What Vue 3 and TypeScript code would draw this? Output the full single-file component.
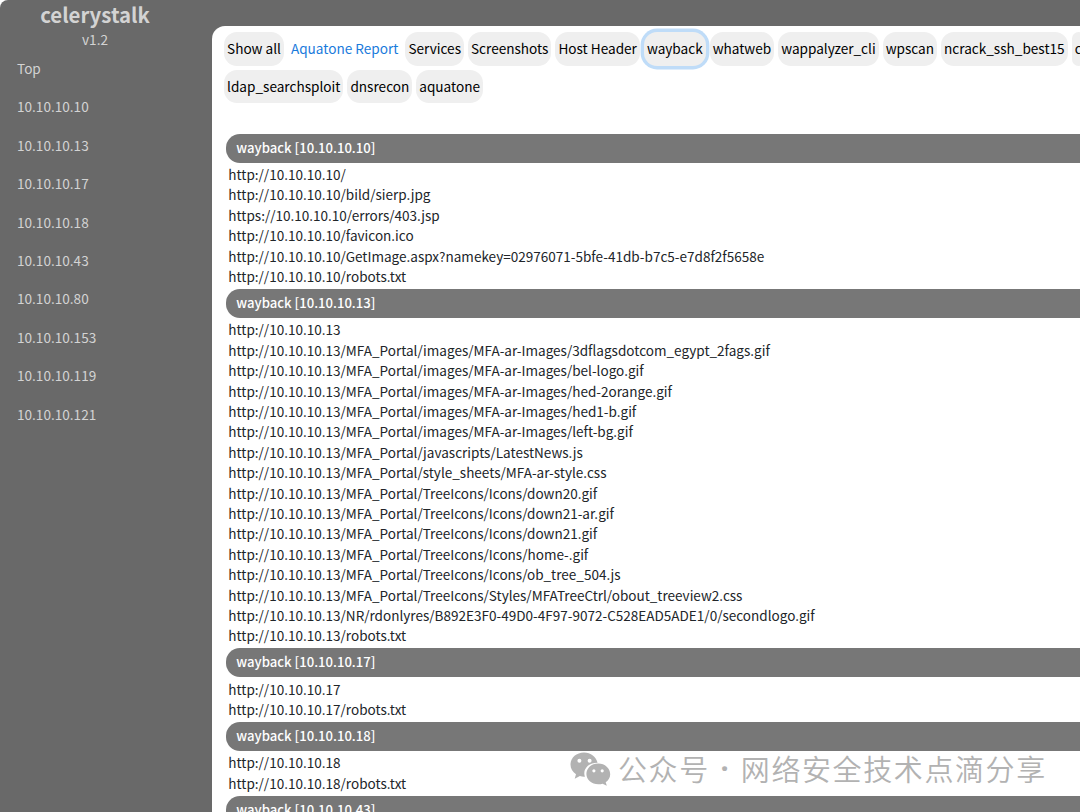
<script setup lang="ts">
interface Tool {
  name: string
  link?: boolean
  active?: boolean
}

interface Report {
  host: string
  urls: string[]
}

const hosts: string[] = [
  '10.10.10.10', '10.10.10.13', '10.10.10.17', '10.10.10.18', '10.10.10.43',
  '10.10.10.80', '10.10.10.153', '10.10.10.119', '10.10.10.121',
]

const toolRows: Tool[][] = [
  [
    { name: 'Show all' },
    { name: 'Aquatone Report', link: true },
    { name: 'Services' },
    { name: 'Screenshots' },
    { name: 'Host Header' },
    { name: 'wayback', active: true },
    { name: 'whatweb' },
    { name: 'wappalyzer_cli' },
    { name: 'wpscan' },
    { name: 'ncrack_ssh_best15' },
    { name: 'c' },
  ],
  [{ name: 'ldap_searchsploit' }, { name: 'dnsrecon' }, { name: 'aquatone' }],
]

const portal = 'http://10.10.10.13/MFA_Portal'

const reports: Report[] = [
  {
    host: '10.10.10.10',
    urls: [
      'http://10.10.10.10/',
      'http://10.10.10.10/bild/sierp.jpg',
      'https://10.10.10.10/errors/403.jsp',
      'http://10.10.10.10/favicon.ico',
      'http://10.10.10.10/GetImage.aspx?namekey=02976071-5bfe-41db-b7c5-e7d8f2f5658e',
      'http://10.10.10.10/robots.txt',
    ],
  },
  {
    host: '10.10.10.13',
    urls: [
      'http://10.10.10.13',
      `${portal}/images/MFA-ar-Images/3dflagsdotcom_egypt_2fags.gif`,
      `${portal}/images/MFA-ar-Images/bel-logo.gif`,
      `${portal}/images/MFA-ar-Images/hed-2orange.gif`,
      `${portal}/images/MFA-ar-Images/hed1-b.gif`,
      `${portal}/images/MFA-ar-Images/left-bg.gif`,
      `${portal}/javascripts/LatestNews.js`,
      `${portal}/style_sheets/MFA-ar-style.css`,
      `${portal}/TreeIcons/Icons/down20.gif`,
      `${portal}/TreeIcons/Icons/down21-ar.gif`,
      `${portal}/TreeIcons/Icons/down21.gif`,
      `${portal}/TreeIcons/Icons/home-.gif`,
      `${portal}/TreeIcons/Icons/ob_tree_504.js`,
      `${portal}/TreeIcons/Styles/MFATreeCtrl/obout_treeview2.css`,
      'http://10.10.10.13/NR/rdonlyres/B892E3F0-49D0-4F97-9072-C528EAD5ADE1/0/secondlogo.gif',
      'http://10.10.10.13/robots.txt',
    ],
  },
  { host: '10.10.10.17', urls: ['http://10.10.10.17', 'http://10.10.10.17/robots.txt'] },
  { host: '10.10.10.18', urls: ['http://10.10.10.18', 'http://10.10.10.18/robots.txt'] },
  { host: '10.10.10.43', urls: [] },
]
</script>

<template>
  <div class="page">
    <aside class="sidebar">
      <h1>celerystalk</h1>
      <p class="version">v1.2</p>
      <nav>
        <a>Top</a>
        <a v-for="host in hosts" :key="host">{{ host }}</a>
      </nav>
    </aside>

    <main class="panel">
      <div v-for="(row, i) in toolRows" :key="i" class="tools">
        <template v-for="tool in row" :key="tool.name">
          <a v-if="tool.link" class="report-link">{{ tool.name }}</a>
          <button v-else :class="{ active: tool.active }">{{ tool.name }}</button>
        </template>
      </div>

      <div class="reports">
        <section v-for="report in reports" :key="report.host">
          <h2>wayback [{{ report.host }}]</h2>
          <ul>
            <li v-for="url in report.urls" :key="url">{{ url }}</li>
          </ul>
        </section>
      </div>
    </main>

    <div class="watermark">
      <svg width="41" height="34" viewBox="0 0 41 34">
        <path
          fill="#b2b2b2"
          fill-rule="evenodd"
          d="M14 .5C6.3.500.500 5.800.500 12.600c0 4 2.100 7.500 5.500 9.700L4.700 26.800l5.200-2.700c1.600.5 3.200.7 5 .6-2.500-7.200 3-13.800 12.700-13.900C26.300 4.900 20.800.5 14 .5ZM9.400 6.800a2 2 0 1 1 0 4 2 2 0 0 1 0-4Zm10.200 0a2 2 0 1 1 0 4 2 2 0 0 1 0-4Z"
        />
        <path
          fill="#b2b2b2"
          fill-rule="evenodd"
          d="M28.200 11.600c6.800 0 12 4.800 12 10.700 0 3.300-1.800 6.200-4.500 8l1.100 3.400-4.200-2c-1.300.4-2.700.6-4.200.6-6.800 0-12-4.400-12-10.200S21.400 11.600 28.200 11.600Zm-4.300 5.600a1.600 1.600 0 1 0 0 3.200 1.600 1.600 0 0 0 0-3.200Zm8.300 0a1.600 1.600 0 1 0 0 3.200 1.600 1.600 0 0 0 0-3.200Z"
        />
      </svg>
      <span class="account">公众号</span>
      <span class="dot">·</span>
      <span class="name">网络安全技术点滴分享</span>
    </div>
  </div>
</template>

<style>
body {
  margin: 0;
  background: #fff;
  overflow: hidden;
}
</style>

<style scoped>
.page {
  position: relative;
  display: flex;
  box-sizing: border-box;
  width: 1080px;
  height: 812px;
  overflow: hidden;
  background: #696969;
  border-top-left-radius: 8px;
  font-family: "Noto Sans CJK SC", sans-serif;
  font-size: 13.6px;
}
.sidebar {
  flex: none;
  width: 212px;
  color: #d3d3d3;
}
h1 {
  margin: 0;
  width: 190px;
  text-align: center;
  font-size: 20.4px;
  line-height: 29px;
  font-weight: 700;
}
.version {
  margin: 0;
  width: 190px;
  text-align: center;
  line-height: 20px;
}
nav {
  display: flex;
  flex-direction: column;
  padding-left: 17px;
}
nav a {
  height: 38.4px;
  line-height: 38.4px;
}
.panel {
  flex: none;
  box-sizing: border-box;
  width: 1000px;
  height: 900px;
  margin-top: 26px;
  padding: 6px 0 0 12px;
  background: #fff;
  border-top-left-radius: 13px;
}
.tools {
  display: flex;
  gap: 3.9px;
  height: 37.9px;
}
button {
  flex: none;
  box-sizing: border-box;
  height: 33.5px;
  padding: 0 3.05px;
  border: 0;
  border-radius: 13px;
  background: #efefef;
  color: #000;
  font: inherit;
  line-height: 32.6px;
}
button.active {
  box-shadow: 0 0 0 3.4px #bfdcf8;
}
.report-link {
  padding: 0 3.05px;
  color: #1a7bdc;
  line-height: 33px;
}
.reports {
  padding: 25.8px 0 0 1.5px;
}
h2 {
  box-sizing: border-box;
  height: 29px;
  margin: 0;
  padding-left: 10.8px;
  border-radius: 14px;
  background: #777;
  color: #fff;
  font-size: 13.12px;
  font-weight: 500;
  line-height: 28px;
}
ul {
  margin: 0;
  padding: 1.5px 0 2.5px 2.8px;
  list-style: none;
}
li {
  height: 20.4px;
  line-height: 20.4px;
  color: #212529;
  font-size: 13.54px;
  white-space: nowrap;
}
.watermark {
  position: absolute;
  left: 570px;
  top: 752px;
  display: flex;
  align-items: center;
  height: 34px;
  color: #b2b2b2;
  font-size: 29px;
  font-weight: 350;
  letter-spacing: 1.6px;
  white-space: nowrap;
}
.account,
.dot,
.name {
  margin-top: -3px;
}
.account {
  margin-left: 7px;
}
.dot {
  width: 31px;
  font-family: "Noto Sans", sans-serif;
  font-weight: 700;
  text-align: center;
}
</style>
